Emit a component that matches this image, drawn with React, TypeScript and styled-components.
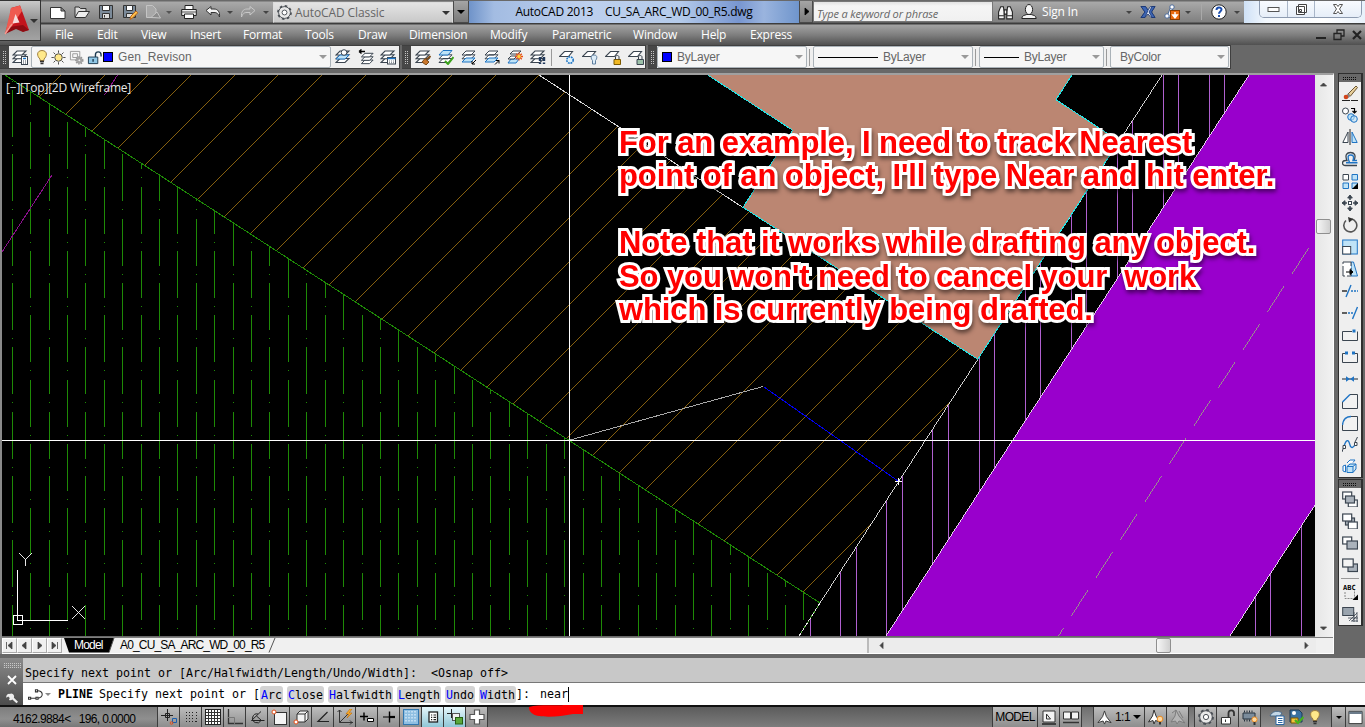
import React from "react";
import styled, { createGlobalStyle, css } from "styled-components";

const Global = createGlobalStyle`
  * { box-sizing: border-box; }
  html, body { margin: 0; padding: 0; background: #686868; overflow: hidden; }
  svg { display: block; flex: none; }
`;

const ui = `"Open Sans", "Noto Sans", sans-serif`;
const arial = `"Liberation Sans", Arial, sans-serif`;
const mono = `"DejaVu Sans Mono", "Liberation Mono", monospace`;

/* ---------- icons ---------- */
const D = "#3b4550";
const B = "#1f74c4";
const LB = "#bfe3f7";

const layers = (fill = "#fff", stroke = D) => (
  <g fill={fill} stroke={stroke} strokeWidth="1.1">
    <path d="M1 13.5h9l4-4H5z" />
    <path d="M1 9.8h9l4-4H5z" />
    <path d="M1 6h9l4-4H5z" />
  </g>
);
const plane = (
  <path d="M.5 7.5h9l4-5h-8z" fill="#fff" stroke={D} strokeWidth="1.1" />
);
const win = (x: number, y: number, f = "#fff") => (
  <rect x={x} y={y} width="9" height="7" fill={f} stroke={D} strokeWidth="1.2" />
);

const art: Record<string, React.ReactNode> = {
  newFile: <path d="M.5 3.500h10.500l4 3.500v7.500H.5zM11 3.500v3.500h4" fill="#fff" stroke="#333" />,
  open: (
    <g stroke="#333" fill="#eee">
      <path d="M1 13V3h4l1.500 1.500H12V7" fill="#ddd" />
      <path d="M1 13.500 4.500 7.500H15.500L11.500 13.500z" />
    </g>
  ),
  save: (
    <g stroke="#333">
      <path d="M1.500 1.500h13v13h-13z" fill="#7b8a99" />
      <path d="M4.500 1.500h7v5h-7z" fill="#fff" />
      <path d="M4.500 9.500h7v5h-7z" fill="#ddd" />
      <path d="M6.500 11v2.500" />
    </g>
  ),
  saveAs: (
    <g stroke="#333">
      <path d="M1.500 1.500h12v12h-12z" fill="#7b8a99" />
      <path d="M4.500 1.500h6v5h-6z" fill="#fff" />
      <path d="M4.500 9.500h6v4h-6z" fill="#ddd" />
      <path d="M8 15.500 9 12l5-5 1.800 1.800-5 5z" fill="#ffc04a" stroke="#b5651d" />
    </g>
  ),
  exportFile: (
    <g fill="#a8a8a8" stroke="#c4c4c4">
      <path d="M1.500 1.500h6l3.500 3.500v8.500H1.500z" />
      <path d="M6 13.500 12 8l3.500 6z" fill="#8b8b8b" />
    </g>
  ),
  print: (
    <g stroke="#222">
      <path d="M4 1.500h8v4H4z" fill="#fff" />
      <path d="M.7 5.500h14.600v6H.7z" fill="#eee" />
      <path d="M1 8h14" stroke="#555" />
      <path d="M3.500 10h9v4.500h-9z" fill="#fff" />
    </g>
  ),
  undo: <path d="M1 6.500 6 2.500v2.500h3c4 0 6 3 5.500 8C13 9.500 12 8.500 9 8.500H6v2.500z" fill="#f2f2f2" stroke="#333" />,
  redo: <path d="M15 6.500 10 2.500v2.500H7c-4 0-6 3-5.500 8C3 9.500 4 8.500 7 8.500h3v2.500z" fill="#999" stroke="#c8c8c8" />,
  gear: (
    <g fill="none" stroke="#4a4f55">
      <circle cx="8" cy="8" r="6.300" fill="#e8e8e8" />
      <circle cx="8" cy="8" r="7" strokeWidth="1.800" strokeDasharray="2.750 2.750" />
      <circle cx="8" cy="8" r="2.600" fill="#fff" />
    </g>
  ),
  binoculars: (
    <g fill="#f5f5f5" stroke="#222">
      <path d="M1.500 14V7.500L3.500 2.500h2.500l.8 5V14z" />
      <path d="M14.500 14V7.500l-2-5H10L9.200 7.500V14z" />
      <path d="M6.800 5.500h2.400v4H6.800zM1.500 11h5M9.500 11h5" />
    </g>
  ),
  person: (
    <g fill="#f5f5f5" stroke="#222">
      <path d="M.8 14.500C1 11.500 3 11.500 5.800 10.500h4.400c2.800 1 4.800 1 5 4z" />
      <ellipse cx="8" cy="5.500" rx="3.600" ry="5" />
    </g>
  ),
  exchange: (
    <g stroke="#16326e" strokeWidth=".8">
      <path d="M1 2.500h4.500L8 6l2.500-3.500H15L11.500 8l3.500 5.500h-4L8 10l-3 3.500H1L5 8z" fill="#e9eef8" />
      <path d="M1 2.500h4.500L8 6.500 5 13.500H1L5 8z" fill="#3d66b5" />
      <path d="M9 8l3-5.500h3L11.500 8l3.500 5.500h-3z" fill="#3d66b5" />
    </g>
  ),
  share: (
    <g>
      <path d="M5 11 8 3M3 12h6" stroke="#4b6a9b" strokeWidth="3.500" />
      <path d="M5 11 8 3M3 12h6" stroke="#fff" strokeWidth="1.600" />
      <circle cx="8" cy="3" r="2.200" fill="#fff" stroke="#4b6a9b" />
      <circle cx="3" cy="12" r="2.200" fill="#fff" stroke="#4b6a9b" />
      <rect x="6.500" y="6.500" width="9" height="9" fill="#e96b10" stroke="#8a3c00" />
      <path d="M11 8v4M8.800 11 11 13.800 13.200 11z" stroke="#fff" strokeWidth="1.400" fill="#fff" />
    </g>
  ),
  help: (
    <g>
      <circle cx="8" cy="8" r="7.200" fill="#fff" stroke="#222" />
      <path d="M5.500 6c0-3.500 5-3.300 5-.4C10.500 7.500 8 7.600 8 9.700" fill="none" stroke="#1d4fae" strokeWidth="2" />
      <rect x="7" y="11" width="2" height="2" fill="#1d4fae" />
    </g>
  ),
  layerProps: (
    <g>
      {layers()}
      <rect x="9.500" y="7.500" width="6" height="8" fill="#fff" stroke={D} />
      <path d="M11 9.500h3" stroke={B} strokeWidth="1.500" />
      <path d="M11 12h3M11 14h3" stroke={D} strokeDasharray="1 1" />
    </g>
  ),
  bulb: (
    <g>
      <path d="M8 1.500c-6 .3-5 6-2 8.500v1.500h4V10c3-2.500 4-8.200-2-8.500z" fill="#ffe98a" stroke="#a08040" />
      <path d="M6 12.500h4M6.500 14.500h3" stroke="#333" strokeWidth="1.600" />
    </g>
  ),
  sun: (
    <g stroke="#444">
      <circle cx="8" cy="8" r="4" fill="#ffe98a" />
      <path d="M8 .5v2.500M8 13v2.500M.5 8H3M13 8h2.500M2.700 2.700l1.700 1.700M11.600 11.600l1.700 1.700M2.700 13.300l1.700-1.700M11.600 4.400l1.700-1.700" />
    </g>
  ),
  vpFreeze: (
    <g stroke="#999" fill="none">
      <path d="M1.500 1.500h10v9h-10zM4 4h5v4H4z" />
      <circle cx="11" cy="11" r="3.500" fill="#aaa" strokeWidth="2" strokeDasharray="1.500 1" />
      <circle cx="11" cy="11" r="1.500" fill="#eee" />
    </g>
  ),
  unlock: (
    <g stroke="#1c3a50">
      <path d="M1.500 7.500h10v7h-10z" fill="#8fc7e6" />
      <path d="M9 7.500V5c0-4 6-4 6 0v2" fill="none" strokeWidth="1.500" />
      <path d="M6.500 9.500v3" strokeWidth="1.500" />
    </g>
  ),
  layCurrent: (
    <g>
      {layers()}
      <path d="M1 10h9l4-4H5z" fill={LB} stroke={B} />
      <circle cx="9" cy="3.500" r="2.800" fill="#fff" stroke={D} />
    </g>
  ),
  layPrev: (
    <g>
      <g transform="translate(2.500 2.500) scale(.9)">{layers()}</g>
      <path d="M1 2.500h6M1 2.500l2.500-2M1 2.500l2.500 2" stroke="#000" fill="none" strokeWidth="1.400" />
    </g>
  ),
  layState: (
    <g>
      {layers()}
      <rect x="7.500" y="8.500" width="8" height="6.500" fill="#fff" stroke={D} />
      <path d="M7.500 9.500h8" stroke={B} strokeWidth="1.500" />
      <path d="M9 12h5M9 13.700h5" stroke={D} strokeWidth=".7" strokeDasharray="1 1" />
    </g>
  ),
  layMatch: (
    <g>
      {layers()}
      <path d="M15.500 7 11 11" stroke="#7a4a1a" strokeWidth="2" />
      <path d="M7 13l3-3.500 4 3.500-3 3z" fill="#c9762b" stroke="#7a4a1a" />
    </g>
  ),
  layCheck: (
    <g>
      <g fill="#fff" stroke={D}>
        <path d="M1 13.500h9l4-4H5zM1 9.800h9l4-4H5z" />
        <path d="M1 6h9l4-4.500H5z" fill={LB} stroke={B} />
      </g>
      <path d="M7 12l3 3 5.500-7" stroke="#3ba31c" strokeWidth="2" fill="none" />
    </g>
  ),
  layIso: (
    <g>
      <g fill="#fff" stroke={D}>
        <path d="M1 6h9l4-4H5zM1 9.800h9l4-4H5z" />
        <path d="M1 13h9l4-4H5z" fill={LB} stroke={B} />
      </g>
      <path d="M15 11l-4 4M11 12v3h3" stroke="#000" fill="none" />
    </g>
  ),
  layUniso: (
    <g>
      <g fill="#fff" stroke={D}>
        <path d="M1 6h9l4-4H5zM1 9.800h9l4-4H5z" />
        <path d="M1 13h9l4-4H5z" fill={LB} stroke={B} />
      </g>
      <path d="M11 15.500l4-4M12 11.500h3v3" stroke="#000" fill="none" />
    </g>
  ),
  layFreeze: (
    <g>
      <path d="M3 5h8l3-3H6z" fill="#fff" stroke={D} />
      <path d="M1 14h8l3-4H4z" fill={LB} stroke={B} />
      <path d="M1 10h6l3-3H4z" fill="#fff" stroke={D} />
      <path d="M12 3.500v8M8 7.500h8M9.200 4.700l5.600 5.600M14.800 4.700l-5.600 5.600" stroke="#e5501a" strokeWidth="1.300" />
      <circle cx="12" cy="7.500" r="1.800" fill="#ffd23a" />
    </g>
  ),
  layWalk: (
    <g>
      {layers()}
      <path d="M10 8v4M10 13.500v1.500M14 8v4M14 13.500v1.500" stroke="#21395c" strokeWidth="2.400" />
    </g>
  ),
  plFreeze: (
    <g>
      {plane}
      <circle cx="11" cy="11" r="3.200" fill="#dff2fc" stroke={B} strokeWidth="1.600" strokeDasharray="1.800 .8" />
    </g>
  ),
  plOff: (
    <g>
      {plane}
      <path d="M12 6c-4 0-3 4-1.500 5.500V15h3v-3.500C15 10 16 6 12 6z" fill="#dcecf8" stroke="#5f7f9f" />
    </g>
  ),
  plLock: (
    <g>
      {plane}
      <path d="M9 10.500h6.500v5H9z" fill="#f0b823" stroke="#7d5a00" />
      <path d="M10.500 10.500V8c0-2 3.500-2 3.500 0v2.500" fill="none" stroke={D} />
    </g>
  ),
  plUnlock: (
    <g>
      {plane}
      <path d="M9 10.500h6.500v5H9z" fill="#9cc0a8" stroke={D} />
      <path d="M10.500 10.500V8c0-2 3.500-2 3.500 0v2.500" fill="none" stroke={D} />
    </g>
  ),
  erase: (
    <g>
      <path d="M6 9l8-8 1.500 1.500L8.500 11z" fill="#e8cf9a" stroke="#6b5632" />
      <path d="M5 9.500l2.500 2.500" stroke="#888" strokeWidth="3" />
      <circle cx="4" cy="12" r="2.300" fill="#d2451b" />
      <path d="M0 15.500h8M9 15.500h7" stroke="#222" />
    </g>
  ),
  copy: (
    <g fill="none">
      <circle cx="3.500" cy="4" r="3" stroke={D} fill="#fff" />
      <circle cx="9" cy="10" r="3.300" stroke={B} fill={LB} />
      <circle cx="12" cy="12" r="3.300" stroke={B} fill={LB} fillOpacity=".6" />
      <path d="M9 1.500h3.500V5M10.500 4l2 2 2-2" stroke="#000" strokeWidth="1.200" />
    </g>
  ),
  mirror: (
    <g>
      <path d="M6 3v10.500H.8z" fill="#fff" stroke={D} />
      <path d="M10 3v10.500h5.200z" fill={LB} stroke={B} />
      <path d="M8 0v16" stroke="#222" />
    </g>
  ),
  offset: (
    <g fill="none">
      <path d="M15 14.500H3.500c-4 0-4-5 0-5H5C2.500 4 5 1.500 8.500 1.500s6 2.500 3.500 8" stroke={D} strokeWidth="1.300" />
      <path d="M15.500 11.800H4M15 9.500h-4C12.500 5 11 4 8.500 4S5 5.500 7.500 11.500" stroke={B} strokeWidth="1.400" />
    </g>
  ),
  array: (
    <g fill={LB} stroke={B}>
      <path d="M1 1.500h5.500V7H1z" fill="#fff" stroke={D} />
      <path d="M10 1.500h5.500V7H10zM1 10h5.500v5.500H1zM10 10h5.500v5.500H10z" />
      <path d="M16 10v6h-6z" fill="#000" stroke="none" />
    </g>
  ),
  move: (
    <g stroke={D} fill={D}>
      <path d="M8 0l2.300 3H5.700zM8 16l2.300-3H5.700zM0 8l3-2.300v4.600zM16 8l-3-2.300v4.600z" />
      <path d="M8 3v2M8 11v2M3 8h2M11 8h2" strokeWidth="1.500" />
      <rect x="6.500" y="6.500" width="3" height="3" fill="#fff" />
    </g>
  ),
  rotate: (
    <g fill="none" stroke="#555">
      <path d="M4 3.500A6.500 6.500 0 1 0 9.500 2" strokeWidth="1.600" />
      <path d="M6 0l5.500 2L7 5.500z" fill="#333" stroke="none" />
    </g>
  ),
  scale: (
    <g>
      <rect x=".7" y="1" width="14.600" height="14" fill={LB} stroke={B} />
      <rect x=".7" y="7.500" width="8" height="7.500" fill="#fff" stroke={D} />
    </g>
  ),
  stretch: (
    <g>
      <path d="M9 1h2.500L15.500 15H9z" fill={LB} stroke={B} />
      <path d="M1 1h8v14H1z" fill="#fff" stroke={D} strokeDasharray="12 2" />
      <path d="M4 11h4M8 8.500l3 2.500-3 2.500z" stroke="#000" fill="#000" />
    </g>
  ),
  trim: <g strokeWidth="1.400"><path d="M0 8h5" stroke="#222" /><path d="M9 8h7" stroke={B} strokeDasharray="2 1" /><path d="M4 14l5-12" stroke={B} /></g>,
  extend: <g strokeWidth="1.400"><path d="M0 8h5" stroke="#222" /><path d="M6 8h6" stroke={B} strokeDasharray="2 1" /><path d="M10.500 14l5-12" stroke={B} /></g>,
  breakPt: <g><path d="M10 4.500H.5v9h15v-9" fill="#f2f2f2" stroke={D} /><rect x="10.500" y="2.500" width="3" height="3" fill={B} /></g>,
  breakTwo: <g><path d="M3 4.500H.5v9h15v-9H13" fill="#f2f2f2" stroke={D} /><path d="M3 2.500h3v3H3zM10 2.500h3v3h-3z" fill={B} /></g>,
  join: <g><path d="M0 8h16" stroke={D} strokeWidth="1.200" /><path d="M4 5.200 8 8l-4 2.800zM12 5.200 8 8l4 2.800z" fill={B} /></g>,
  chamfer: <g><path d="M8 1.500h7.500v14H.5V9" fill="#f2f2f2" stroke={D} /><path d="M.5 9L8 1.500" stroke={B} strokeWidth="1.400" /></g>,
  fillet: <g><path d="M9 1.500h6.500v14H.5V10" fill="#f2f2f2" stroke={D} /><path d="M.5 10C1 5 4 1.500 9 1.500" fill="none" stroke={B} strokeWidth="1.400" /></g>,
  blend: (
    <g fill="none">
      <path d="M0 15l2-6M13 5l2.500-5" stroke={D} />
      <path d="M2 9c3-9 5-5 6-1s4 3 6-2" stroke={B} strokeWidth="1.300" />
      <path d="M1 8.500h2.500v3H1zM12.500 5.500H15v3h-2.500z" stroke={D} fill="#fff" />
    </g>
  ),
  explode: (
    <g fill={LB} stroke={B}>
      <path d="M5 7.500h6v6H5zM5 7.500l3-2.500h6l-3 2.500M14 5v5l-3 3.500" />
      <path d="M1 7l2.500-1v7L1 12zM5 4l3-3h5l-2 2.500" fill="#fff" />
    </g>
  ),
  order1: <g>{win(0.7, 1)}{win(6.3, 9)}<rect x="3.500" y="5" width="9" height="7" fill="#aab2bb" stroke={D} strokeWidth="1.200" /></g>,
  order2: <g><rect x="3.500" y="5" width="9" height="7" fill="#aab2bb" stroke={D} strokeWidth="1.200" />{win(0.7, 1)}{win(6.3, 9)}</g>,
  order3: <g>{win(0.7, 2)}<rect x="5" y="6" width="10.500" height="8" fill="#aab2bb" stroke={D} strokeWidth="1.200" /></g>,
  order4: <g><rect x="6" y="7" width="9.500" height="7.500" fill="#aab2bb" stroke={D} strokeWidth="1.200" /><rect x=".7" y="2" width="10.500" height="8" fill="#f4f4f4" stroke={D} strokeWidth="1.200" /></g>,
  orderText: (
    <g>
      <path d="M3 8v6.500h9.500V6" fill="#eee" stroke="#888" strokeDasharray="2 1" />
      <path d="M16 10.500V16h-5.500z" fill="#000" />
    </g>
  ),
  orderHatch: (
    <g>
      <path d="M7 15l8-8M10 15l5-5M6 12h10M9 15h7M12 6v10M15 6v10" stroke={D} strokeWidth=".8" />
      <rect x=".7" y="1.500" width="11" height="8" fill="#9aa4ae" stroke={D} />
    </g>
  ),
  infer: (
    <g fill="none" stroke="#222">
      <path d="M0 6.500h12M6.500 0v12M4.500 4.500h4v4h-4z" />
      <path d="M11.500 15V9.500h4v4h-4" stroke="#1d5fae" />
      <circle cx="10.500" cy="14" r="1.300" stroke="#e5501a" />
    </g>
  ),
  snap: <path d="M3 3.500h9M3 6.500h9M3 9.500h9M13.500 3v10M3 12.500h10" stroke="#222" strokeDasharray="1 2" />,
  grid: <g><rect x=".5" y=".5" width="15" height="15" stroke="#222" fill="#fff" /><path d="M3.500 1v14M6.500 1v14M9.500 1v14M12.500 1v14M1 3.500h14M1 6.500h14M1 9.500h14M1 12.500h14" stroke="#333" /></g>,
  ortho: <g fill="none" stroke="#333"><path d="M1.500 0v14.500H16" strokeWidth="1.300" /><path d="M1 8.500h6.500V15" stroke="#777" /></g>,
  polar: <g fill="none" stroke="#222"><path d="M2.500 11.500h13M2.500 11.500 12 2.500" /><path d="M9 5a4.500 4.500 0 1 0 3 6.500M7.500 7l5 4.500" /></g>,
  osnap: <g><rect x="3.500" y="3.500" width="12" height="12" fill="#f4f4f4" stroke="#333" /><circle cx="3" cy="3" r="2" fill="#fff" stroke="#e5501a" /></g>,
  osnap3: (
    <g stroke="#333" fill="#f4f4f4">
      <path d="M4 5l3-3h8v8l-3 3H4zM4 5h8v8M12 5l3-3" />
      <circle cx="3" cy="13" r="2" fill="#fff" stroke="#e5501a" />
    </g>
  ),
  otrack: <path d="M12.500 3 3 12.500h11" fill="none" stroke="#222" strokeWidth="1.200" />,
  ducs: <g fill="none" stroke="#333"><path d="M2.500 1v12.500H16M2.500 13.500 12 4M.5 3l2-2 2 2M13 11.500l2 2-2 2" /><path d="M13 0l-4 5h3l-2 4 5-5h-3l3-4z" fill="#ffb52e" stroke="#c26a00" strokeWidth=".6" /></g>,
  dyn: <g stroke="#000" fill="none"><path d="M1 7.500h8M5 3.500v8" strokeWidth="1.400" /><path d="M8.500 9.500h6v3h-6z" fill="#fff" /></g>,
  lwt: <g stroke="#000"><path d="M2 8h6" /><path d="M8 8h6" strokeWidth="2.200" /><path d="M8.500 2.500v11" strokeWidth="1.400" /></g>,
  transp: <g><rect x=".5" y=".5" width="15" height="15" fill="#8fbfe2" stroke="#3277b0" /><path d="M3 2v12M6 2v12M9 2v12M12 2v12" stroke="#d2e8f7" strokeWidth="1.500" strokeDasharray="1.500 1.500" /></g>,
  qprops: <g><rect x="4" y="3" width="8.500" height="10" fill="#fff" stroke="#222" strokeWidth="1.300" /><path d="M6 6h1.200M8.500 6h2.500M6 8.300h1.200M8.500 8.300h2.500M6 10.600h1.200M8.500 10.600h2.500" stroke="#222" strokeWidth="1.200" /></g>,
  selCycle: <g><path d="M0 4.500h9M4.500 0v9" stroke="#222" /><rect x="5.500" y="4.500" width="7" height="7" fill="#eee" stroke="#555" /><rect x="8.500" y="8.500" width="7" height="6.500" fill="#5aa83c" stroke="#255f12" /></g>,
  monitor: <path d="M5.500 1h5v4.500H15v5h-4.500V15h-5v-4.500H1v-5h4.500z" fill="#fff" stroke="#555" strokeWidth="1.200" />,
  paper: <g><path d="M2 2h12v11H2z" fill="#f4f4f4" stroke="#333" /><path d="M5.500 5v5h4z" fill="none" stroke="#333" /><path d="M1 15h14" stroke="#222" strokeWidth="1.500" /></g>,
  views: <g fill="#f4f4f4" stroke="#333"><path d="M.5 3h7v7h-7zM8.500 3h7v7h-7z" /><path d="M0 13.500h16" strokeWidth="1.500" /></g>,
  anno: <path d="M8 1l2 6 5 6.500-5.500-1.800L8 15l-1.500-3.300L1 13.500 6 7z" fill="#fff" stroke="#333" />,
  annoVis: (
    <g>
      <path d="M6 1l2 6 4 6-4.500-1.500L6 15l-1-3.500L.5 13 4.500 7z" fill="#fff" stroke="#333" />
      <circle cx="12" cy="10" r="2.800" fill="#ffd9a0" stroke="#e98a20" />
      <path d="M12 13v2.500" stroke="#333" strokeWidth="2" />
    </g>
  ),
  annoAuto: <path d="M6 1l3 6 6 7-6-2-2 3-1.500-3L1 13l4-6zM2 4l4-3M9 2l4 7" fill="#b5b5b5" stroke="#7c7c7c" />,
  lockStatus: <g stroke="#333" fill="#fff"><path d="M1.500 8.500h9V15h-9z" /><path d="M8.500 8V4c0-3.500 5.500-3.500 5.500 0v3" fill="none" strokeWidth="1.800" /><path d="M5.500 10.500V13" /></g>,
  hardware: (
    <g>
      <path d="M1 4h12v6H1z" fill="#7b8c9c" stroke="#26323e" />
      <path d="M2 2.500h10M2 11.500h6" stroke="#26323e" strokeWidth="2" strokeDasharray="1 1.500" />
      <circle cx="12.500" cy="10.500" r="2.600" fill="#ffd9a0" stroke="#e98a20" />
      <path d="M12.500 13v3" stroke="#333" strokeWidth="2" />
    </g>
  ),
  trayA: <g><path d="M1 7c2-5 8-6 12-3l-2 3H5z" fill="#c4d7e6" stroke="#4a6a88" /><path d="M7 7h8v8.500H7z" fill="#fff" stroke="#2b67a4" /><path d="M9 9.500h4.500M9 11.500h4.500M9 13.500h4.500" stroke="#2b67a4" /></g>,
  trayB: <g><path d="M2 1h9l3 3v9H2z" fill="#39719f" stroke="#1f3b57" /><path d="M3 9h7v5H3z" fill="#f0c23c" stroke="#7d5a00" /><circle cx="6" cy="4" r="2" fill="#fff" /><path d="M7 11l3 3 5.500-6" stroke="#46b31c" strokeWidth="2.200" fill="none" /></g>,
  clean: <g><path d="M1 1.500h14v13H1z" fill="#fff" stroke="#333" /><path d="M1 3h14" stroke="#6b7b8a" strokeWidth="2.500" /></g>,
  pline: <g fill="none" stroke="#333"><path d="M2 11.500h6M8 4.500c7-1 7 7 1 7" /><path d="M.5 10.500h2v2h-2zM7.500 10.500h2v2h-2zM7 3.500h2v2H7z" fill="#fff" /></g>,
  wrench: <path d="M5 2.500a4 4 0 0 0-4.500 5l2.500-1.500 2 2L4 10.500a4 4 0 0 0 4.500-.5l5.500 5 2-2-5.500-5.500A4 4 0 0 0 5 2.500z" fill="#eee" />,
};

const Icon = ({ n, s = 16 }: { n: string; s?: number }) => (
  <svg width={s} height={s} viewBox="0 0 16 16" fill="none">{art[n]}</svg>
);

/* ---------- shared pieces ---------- */
const dots = (bg: string, dot: string) => css`
  background-image: linear-gradient(${bg} 1px, transparent 1px), linear-gradient(90deg, ${bg} 1px, ${dot} 1px);
  background-size: 2px 2px;
`;
const Caret = styled.i<{ c?: string; w?: number }>`
  width: 0; height: 0; flex: none;
  border: ${(p) => p.w ?? 4}px solid transparent;
  border-top-color: ${(p) => p.c ?? "#444"};
  border-bottom: 0;
`;
const Label = styled.span<{ size?: number; ls?: number; c?: string; font?: string }>`
  font: ${(p) => p.size ?? 12}px/16px ${(p) => p.font ?? ui};
  letter-spacing: ${(p) => p.ls ?? 0}px;
  color: ${(p) => p.c ?? "#000"};
  white-space: pre;
`;

/* ---------- shell ---------- */
const Shell = styled.div`
  width: 1365px; height: 727px; overflow: hidden;
  display: flex; flex-direction: column; position: relative;
  background: #686868;
`;

const TitleBar = styled.header`
  height: 25px; display: flex; flex: none; padding-top: 1px;
  background: linear-gradient(#696969 1px, #a9a9a9 2px, #808080 22px, #3d3d3d 23px, #3d3d3d 24px, #a5a5a5 25px);
`;
const AppButton = styled.div`
  position: absolute; left: 0; top: 0; width: 41px; height: 41px; z-index: 2;
  display: flex; align-items: center; padding-left: 3px; gap: 1px;
  background: linear-gradient(#c9c9c9, #8c8c8c 55%, #a3a3a3);
  border: 1px solid #333; border-left: 0;
`;
const Quick = styled.div`
  width: 273px; height: 22px; padding-left: 50px; display: flex; align-items: center; flex: none;
`;
const Gap = styled.span<{ w: number }>`width: ${(p) => p.w}px; flex: none;`;
const Workspace = styled.div`
  width: 180px; height: 21px; margin-top: 1px; padding: 0 2px 0 3px; flex: none;
  display: flex; align-items: center; gap: 3px;
  background: linear-gradient(#e4e4e4, #c9c9c9); border: 1px solid #ddd; border-bottom-color: #8c8c8c;
  span { flex: 1; }
`;
const NarrowButton = styled.div<{ w: number }>`
  width: ${(p) => p.w}px; height: 22px; display: flex; align-items: center; justify-content: center; flex: none;
  background: linear-gradient(#a5a5a5, #7a7a7a); border: 1px solid #4a4a4a; border-top: 0;
`;
const Glass = styled.div<{ w: number; light?: boolean }>`
  width: ${(p) => p.w}px; height: 22px; display: flex; align-items: center; justify-content: center; gap: 12px; flex: none;
  ${(p) =>
    p.light
      ? css`background: linear-gradient(90deg, #cfe1f6, #f3f8fd 22px, #fff 80px, #e8f1fb); align-items: flex-start; justify-content: flex-end; padding-right: 3px;`
      : css`background: linear-gradient(90deg, #6f93c9, #a3bce2 25px, #bdd0ee 120px, #b5cbea 210px, #7896d0 270px, #9ab4de 295px, #6f95cc);`}
`;
const Search = styled.div`
  width: 180px; height: 21px; padding: 4px 3px; background: linear-gradient(#e2e2e2, #f5f5f5 4px, #f0f0f0); flex: none;
  border: 1px solid #777; font: italic 11px/15px ${ui}; color: #666; white-space: nowrap; letter-spacing: -0.15px;
`;
const InfoCenter = styled.div`
  width: 251px; height: 22px; padding-left: 4px; display: flex; align-items: center; flex: none;
  & > * { flex: none; }
`;
const ThinRule = styled.i`width: 1px; height: 16px; background: #a9a9a9; margin: 0 9px 0 10px;`;
const WindowButtons = styled.div`
  display: grid; grid-template-columns: 28px 27px 46px; height: 17px; 
  border: 1px solid #8d9bb0; border-top: 0; border-radius: 0 0 5px 5px; overflow: hidden;
  svg { margin: auto; }
  & > div { display: flex; border-right: 1px solid #a9b6c8; background: linear-gradient(#f8fbff, #e6eef8); }
  & > div:last-child { border-right: 0; }
`;

const MenuBar = styled.nav`
  height: 20px; flex: none; display: flex; position: relative; padding-left: 55px;
  background: linear-gradient(#a3a3a3, #7e7e7e 50%, #555 95%, #505050);
`;
const MenuItem = styled.span<{ w: number }>`
  width: ${(p) => p.w}px; font: 12px/20px ${ui}; letter-spacing: -0.2px; color: #fff; flex: none; white-space: nowrap;
`;
const DocButtons = styled.div`
  margin-left: auto; display: flex; align-items: center; gap: 7px; padding-right: 3px;
`;

const ToolRow = styled.div`
  height: 24px; flex: none; display: flex; gap: 2px; background: #686868;
`;
const ToolPanel = styled.div<{ w: number }>`
  width: ${(p) => p.w}px; height: 24px; display: flex; align-items: center; flex: none;
  background: #efefef; border: 1px solid #3f3f3f; border-left: 0;
`;
const Grip = styled.div`
  width: 9px; height: 100%; flex: none; background: #474747; display: flex; align-items: center; justify-content: center;
  &::after { content: ""; width: 5px; height: 14px; ${dots("#474747", "#c4c4c4")} }
`;
const Cell = styled.div<{ w?: number }>`
  width: ${(p) => p.w ?? 23}px; flex: none; display: flex; justify-content: center;
`;
const Divider = styled.div`width: 1px; height: 17px; background: #9a9a9a; margin: 0 3px 0 2px; flex: none;`;
const Combo = styled.div<{ w: number; pad?: number }>`
  width: ${(p) => p.w}px; height: 22px; flex: none; display: flex; align-items: center; gap: 1px;
  padding: 0 3px 0 ${(p) => p.pad ?? 4}px; border: 1px solid #aab2b8; border-radius: 2px;
  background: #f6f6f6;
  & > ${Caret} { margin-left: auto; }
`;
const Swatch = styled.i`width: 10px; height: 10px; background: #00f; border: 1px solid #000; margin-right: 4px;`;
const LineSample = styled.i<{ w: number }>`width: ${(p) => p.w}px; height: 1px; background: #000; margin-right: 4px;`;

const Work = styled.main`
  height: 585px; flex: none; display: flex; padding-top: 4px;
`;
const Viewer = styled.section`
  width: 1334px; height: 581px; border-top: 2px solid #a0a0a0; border-left: 2px solid #8a8a8a;
  border-right: 1px solid #fff; display: flex; flex-direction: column;
`;
const CanvasRow = styled.div`height: 562px; display: flex; position: relative;`;
const Scroll = styled.div`
  width: 18px; height: 562px; background: linear-gradient(90deg, #e6e6e6, #f2f2f2); position: relative;
  display: flex; flex-direction: column; align-items: center; justify-content: space-between; padding: 5px 1px 4px 0;
`;
const Thumb = styled.div<{ x: number; y: number }>`
  position: absolute; left: ${(p) => p.x}px; top: ${(p) => p.y}px; width: 15px; height: 15px;
  border: 1px solid #8f8f8f; border-radius: 2px; background: linear-gradient(90deg, #f6f6f6, #d0d0d0);
`;
const Note = styled.div`
  position: absolute; left: 617px; top: 51px; color: #f00;
  font: bold 31px/33.4px ${arial}; letter-spacing: -0.1px; white-space: pre;
  -webkit-text-stroke: 6px #fff; paint-order: stroke fill; stroke-linejoin: round;
  filter: drop-shadow(1px 3px 2px rgba(0, 0, 0, 0.5));
`;
const ViewLabel = styled.div`
  position: absolute; left: 4px; top: 5px; font: 12px/16px ${ui}; color: #e8e8e8; white-space: pre; letter-spacing: -0.2px;
`;
const TabRow = styled.div`height: 17px; display: flex; background: #f0f0f0; border-top: 1px solid #808080; border-bottom: 1px solid #fff;`;
const NavButton = styled.div`
  width: 15px; height: 15px; display: flex; align-items: center; justify-content: center;
  border: 1px solid #aaa; border-left-color: #fff; border-top-color: #fff;
`;
const TabStrip = styled.div`width: 216px; height: 15px; position: relative;`;
const ActiveTab = styled.span`
  position: absolute; left: 12px; top: 0; font: 12px/15px ${arial}; color: #fff; letter-spacing: -0.8px;
`;
const SheetTab = styled.span`
  position: absolute; left: 58px; top: 0; font: 12px/15px ${arial}; color: #000; letter-spacing: -0.84px; white-space: nowrap;
`;
const HScroll = styled.div`
  margin-left: auto; width: 449px; height: 15px; position: relative; background: #ececec; border-left: 2px solid #bbb;
  display: flex; align-items: center; justify-content: space-between; padding: 0 5px 0 8px; margin-right: 17px;
`;

const Palettes = styled.aside`
  margin-left: 4px; display: flex; flex-direction: column; gap: 1px; width: 25px;
`;
const Palette = styled.div<{ h: number }>`
  height: ${(p) => p.h}px; background: #efefef; border: 1px solid #2f2f2f; border-right-width: 2px;
  display: flex; flex-direction: column; align-items: center;
`;
const PaletteGrip = styled.div`
  width: 100%; height: 8px; background: #686868; flex: none; display: flex; align-items: center; padding-left: 3px;
  &::after { content: ""; width: 14px; height: 5px; ${dots("#686868", "#0c0c0c")} }
`;
const PaletteCell = styled.div`height: 22px; flex: none; display: flex; align-items: center; position: relative;`;
const TinyAbc = styled.span`
  position: absolute; left: 1px; top: 3px; font: bold 7px/8px ${mono}; letter-spacing: 0; color: #000;
`;
const HRule = styled.div`width: 18px; height: 1px; background: #999; margin: 2px 0; flex: none;`;

const Command = styled.section`height: 47px; flex: none; display: flex; margin-top: 4px;`;
const CommandHandle = styled.div`
  width: 23px; flex: none; background: linear-gradient(#8a8a8a, #4c4c4c); display: flex; flex-direction: column; align-items: center; gap: 7px; padding-top: 4px; overflow: hidden;
  &::before { content: ""; width: 18px; height: 6px; flex: none; ${dots("#848484", "#c8c8c8")} }
`;
const CommandBody = styled.div`flex: 1; display: flex; flex-direction: column; font: 11.63px/20px ${mono}; white-space: pre;`;
const History = styled.div`height: 25px; flex: none; background: #c8c8c8; padding: 5px 2px 0; border-bottom: 1px solid #777;`;
const Prompt = styled.div`height: 22px; background: #fff; display: flex; align-items: center; padding-left: 5px;`;
const Opt = styled.span`
  background: #d3d3d3; border-radius: 3px; height: 17px; line-height: 18px; margin-right: 4px; padding: 0 1px;
  b { font-weight: normal; color: #00f; }
`;
const OptLast = styled(Opt)`margin-right: 0;`;
const TextCursor = styled.i`width: 1px; height: 15px; background: #000;`;

const Status = styled.footer`
  height: 22px; flex: none; display: flex; background: #686868; border-top: 2px solid #111; position: relative;
`;
const Coords = styled.div`
  width: 157px; background: linear-gradient(#7d7d7d, #8f8f8f 60%, #777); padding: 2px 0 0 13px;
`;
const StatusButton = styled.div<{ w?: number; tone?: "lit" | "tray" }>`
  width: ${(p) => p.w ?? 22}px; height: 20px; flex: none; display: flex; align-items: center; justify-content: center; gap: 3px;
  border-left: 1px solid #3c3c3c; overflow: hidden;
  background: ${(p) =>
    p.tone === "lit" ? "linear-gradient(#e6f6fa, #8fc6d6)" : p.tone === "tray" ? "linear-gradient(#6f6f6f, #8f8f8f)" : "linear-gradient(#bdbdbd, #8d8d8d)"};
`;
const StatusFill = styled.div`flex: 1; background: linear-gradient(#5c5c5c, #7c7c7c); border-left: 1px solid #3c3c3c;`;
const Marker = styled.div`
  position: absolute; left: 529px; top: 703px;
`;

/* ---------- drawing ---------- */
const W = 1313, H = 561;
const greenY = (x: number) => 75 + (x - 5) * 0.648;
const greens = Array.from({ length: 44 }, (_, i) => ({
  x: Math.floor(12.2 + 18.413 * i) + 0.5,
  y: (i % 2 ? 113.2 : 145.3) - 64.35 - 55.3,
}));
const golds = Array.from({ length: 30 }, (_, i) => {
  const x = 118.2 + 26.34 * (i - 3);
  return { x: Math.round(x), y: Math.round(greenY(x)) };
});
const violets = [810, 840, 856, 886, 902, 932, 948, 979, 994, 1025, 1040, 1071, 1086, 1117, 1132, 1163, 1178, 1209, 1224, 1255, 1270, 1301];

const Drawing = () => (
  <svg width={W} height={H} viewBox={`2 75 ${W} ${H}`} shapeRendering="crispEdges" fill="none">
    <defs>
      <clipPath id="greenArea"><path d="M2 73 5 75 820 603 799 636H2z" /></clipPath>
      <clipPath id="goldArea"><path d="M5 75H539L743 207.500 977.500 359.500 820 603z" /></clipPath>
      <clipPath id="violetArea"><path d="M1162 75 799 636h87L1249 75zM1315 505 1230 636h85z" /></clipPath>
    </defs>
    <rect x="2" y="75" width={W} height={H} fill="#000" />
    <g clipPath="url(#greenArea)" stroke="#1e8a06">
      {greens.map((g) => (
        <line key={g.x} x1={g.x} x2={g.x} y1={g.y} y2="636" strokeDasharray="47 8 1 8.350" />
      ))}
    </g>
    <g clipPath="url(#goldArea)" stroke="#bd8715" strokeWidth=".7">
      {golds.map((g) => (
        <line key={g.x} x1={g.x} y1={g.y} x2={g.x + 560} y2={g.y - 560} />
      ))}
    </g>
    <path d={`M5 75 820 603`} stroke="#1e8a06" />
    <path d="M52 175 2 252M117.500 75 104.500 95" stroke="#8a108a" />
    <path d="M539 75 743 207.500" stroke="#d8d8d8" />
    <g clipPath="url(#violetArea)" stroke="#b060d0">
      {violets.map((x) => <line key={x} x1={x + 0.5} x2={x + 0.5} y1="75" y2="636" />)}
    </g>
    <path d="M1249 75H1315V505L1230 636H886z" fill="#9900cc" />
    <path d="M1249 75 886 636M1315 505 1230 636" stroke="#f4e4fa" strokeWidth=".9" />
    <path d="M1308.700 248 1058.400 636" stroke="#9a9a88" strokeWidth=".9" strokeDasharray="31.500 13.700" />
    <path d="M1162 75 820 603" stroke="#e8e8e8" strokeWidth=".9" />
    <path d="M820 603 799 636" stroke="#58b040" />
    <path d="M820 603 799 636" stroke="#e8e8e8" strokeDasharray="3 3" />
    <path d="M707.700 75 792.700 130.300 743 207.300 977.800 359.300 1119 141 1056 99.700 1072 75z" fill="#bb8672" />
    <path d="M707.700 75 792.700 130.300 743 207.300 977.800 359.300 1119 141 1056 99.700 1072 75" stroke="#1fe8ea" />
    <path d="M570 440 763 386.500" stroke="#a8a8a8" />
    <path d="M764 387 898 481" stroke="#0000f0" />
    <path d="M898.500 478v7M895 481.500h7" stroke="#fff" />
    <path d="M569.500 75V636M2 440.500H1315" stroke="#fff" />
    <g stroke="#fff">
      <path d="M17.500 570v50.500H68M13.500 615.500h9v9h-9z" />
      <path d="M72 606l13 13M85 606l-13 13M19 553l6.500 6.500L32 553M25.500 559.500V566" strokeWidth=".9" />
    </g>
  </svg>
);

const menus: [string, number][] = [
  ["File", 42], ["Edit", 44], ["View", 49], ["Insert", 53], ["Format", 62], ["Tools", 53], ["Draw", 51],
  ["Dimension", 81], ["Modify", 62], ["Parametric", 81], ["Window", 68], ["Help", 49], ["Express", 50],
];
const modify = ["erase", "copy", "mirror", "offset", "array", "move", "rotate", "scale", "stretch", "trim", "extend", "breakPt", "breakTwo", "join", "chamfer", "fillet", "blend", "explode"];
const notes = [
  "For an example, I need to track Nearest",
  "point of an object, I'll type Near and hit enter.",
  " ",
  "Note that it works while drafting any object.",
  "So you won't need to cancel your  work",
  "which is currently being drafted.",
];
const toggles: [string, boolean][] = [
  ["infer", false], ["snap", false], ["grid", false], ["ortho", false], ["polar", false], ["osnap", false], ["osnap3", false], ["otrack", false],
  ["ducs", false], ["dyn", false], ["lwt", false], ["transp", false], ["qprops", true], ["selCycle", true], ["monitor", false],
];

const Arrow = ({ d, c = "#444" }: { d: string; c?: string }) => (
  <svg width="9" height="9" viewBox="0 0 9 9"><path d={d} fill={c} stroke={c} strokeWidth=".8" /></svg>
);

export default function App() {
  return (
    <Shell>
      <Global />
      <AppButton>
        <svg width="26" height="34" viewBox="0 0 26 34">
          <path d="M8 4 17 1.500 26 26 20 27.500 14 24 9 25 2 30 7 12z" fill="#c2141c" />
          <path d="M8 4 17 1.500 19 7 9 22 2 30z" fill="#ef5a50" />
          <path d="M2 30 6 23 20 21 26 26 20 28 13 25z" fill="#8e0c12" />
          <path d="M12.500 10 16.500 18.500 9.500 19.500z" fill="#f6dcdc" />
          <path d="M2 30 9 20" stroke="#f59a90" strokeWidth="1.500" />
        </svg>
        <Caret c="#333" w={4} />
      </AppButton>
      <TitleBar>
        <Quick>
          <Icon n="newFile" /><Gap w={8} /><Icon n="open" /><Gap w={8} /><Icon n="save" /><Gap w={8} /><Icon n="saveAs" /><Gap w={7} />
          <Icon n="exportFile" /><Gap w={5} /><Caret c="#555" w={3} /><Gap w={9} />
          <Icon n="print" /><Gap w={8} /><Icon n="undo" /><Gap w={6} /><Caret c="#444" w={3} /><Gap w={7} /><Icon n="redo" /><Gap w={7} /><Caret c="#444" w={3} />
        </Quick>
        <Workspace><Icon n="gear" s={15} /><Label c="#666" size={12} ls={-0.1}>AutoCAD Classic</Label><Caret c="#333" w={4} /></Workspace>
        <NarrowButton w={16}><Caret c="#000" w={4} /></NarrowButton>
        <Glass w={330}><Label size={12} ls={-0.27}>AutoCAD 2013</Label><Label size={12} ls={-0.27}>CU_SA_ARC_WD_00_R5.dwg</Label></Glass>
        <NarrowButton w={14}><Arrow d="M3 1l4 3.500-4 3.500z" c="#000" /></NarrowButton>
        <Search>Type a keyword or phrase</Search>
        <InfoCenter>
          <Icon n="binoculars" s={17} /><Gap w={7} /><Icon n="person" s={16} /><Gap w={5} />
          <Label c="#fff" ls={-0.2}>Sign In</Label><Gap w={48} /><Caret c="#444" w={3} /><Gap w={8} />
          <Icon n="exchange" /><Gap w={8} /><Icon n="share" /><Gap w={5} /><Caret c="#444" w={3} /><ThinRule /><Icon n="help" /><Gap w={7} /><Caret c="#444" w={3} />
        </InfoCenter>
        <Glass w={121} light>
          <WindowButtons>
            <div><svg width="14" height="7"><rect x="1" y="1.500" width="11" height="4" fill="#fff" stroke="#555" /></svg></div>
            <div><svg width="13" height="13" fill="#fff" stroke="#444"><path d="M3.500 1.500h8v8h-8zM1.500 3.500h8v8h-8zM4.500 6.500h2v2h-2z" /></svg></div>
            <div><svg width="12" height="12"><path d="M1.500 1.500h3L6 3.500 7.500 1.500h3L7.500 6l3 4.500h-3L6 8.500 4.500 10.500h-3L4.500 6z" fill="#fff" stroke="#555" /></svg></div>
          </WindowButtons>
        </Glass>
      </TitleBar>
      <MenuBar>
        {menus.map(([m, w]) => <MenuItem key={m} w={w}>{m}</MenuItem>)}
        <DocButtons>
          <svg width="10" height="10"><path d="M0 8h10" stroke="#222" strokeWidth="2" /></svg>
          <svg width="12" height="12" fill="none" stroke="#222" strokeWidth="1.300"><path d="M4 4V1h7v6H8M1 4.500h7v6H1z" /></svg>
          <svg width="10" height="10"><path d="M1 1l8 8M9 1L1 9" stroke="#222" strokeWidth="2.200" /></svg>
        </DocButtons>
      </MenuBar>
      <ToolRow>
        <ToolPanel w={400}>
          <Grip /><Cell w={22}><Icon n="layerProps" /></Cell>
          <Combo w={300} pad={2}>
            <Icon n="bulb" /><Icon n="sun" s={15} /><Gap w={1} /><Icon n="vpFreeze" s={15} /><Gap w={1} /><Icon n="unlock" s={15} /><Swatch />
            <Label c="#666" font={arial} ls={0.1}>Gen_Revison</Label><Caret c="#999" w={4} />
          </Combo>
          <Cell w={24}><Icon n="layCurrent" /></Cell><Cell w={22}><Icon n="layPrev" /></Cell><Cell w={22}><Icon n="layState" /></Cell>
        </ToolPanel>
        <ToolPanel w={244}>
          <Grip />
          {["layMatch", "layCheck", "layIso", "layUniso", "layFreeze", "layWalk"].map((n) => <Cell key={n}><Icon n={n} /></Cell>)}
          <Divider />
          {["plFreeze", "plOff", "plLock", "plUnlock"].map((n) => <Cell key={n}><Icon n={n} /></Cell>)}
        </ToolPanel>
        <ToolPanel w={583}>
          <Grip />
          <Combo w={150}><Swatch /><Label c="#666" font={arial} ls={-0.2}>ByLayer</Label><Caret c="#999" w={4} /></Combo>
          <Divider />
          <Combo w={160}><LineSample w={60} /><Label c="#666" font={arial} ls={-0.2}>ByLayer</Label><Caret c="#999" w={4} /></Combo>
          <Divider />
          <Combo w={125}><LineSample w={35} /><Label c="#666" font={arial} ls={-0.2}>ByLayer</Label><Caret c="#999" w={4} /></Combo>
          <Divider />
          <Combo w={119} pad={9}><Label c="#666" font={arial} ls={-0.3}>ByColor</Label><Caret c="#999" w={4} /></Combo>
        </ToolPanel>
      </ToolRow>
      <Work>
        <Viewer>
          <CanvasRow>
            <Drawing />
            <ViewLabel>[−][Top][2D Wireframe]</ViewLabel>
            <Note>{notes.map((t, i) => <div key={i}>{t}</div>)}</Note>
            <Scroll>
              <Arrow d="M1.500 6l3-3 3 3z" />
              <Thumb x={1} y={144} />
              <Arrow d="M1.500 3l3 3 3-3z" />
            </Scroll>
          </CanvasRow>
          <TabRow>
            <NavButton><Arrow d="M7 1v7L3 4.500zM1.500 1v7" /></NavButton>
            <NavButton><Arrow d="M6 1v7L2 4.500z" /></NavButton>
            <NavButton><Arrow d="M3 1v7l4-3.500z" /></NavButton>
            <NavButton><Arrow d="M2 1v7l4-3.500zM7.500 1v7" /></NavButton>
            <TabStrip>
              <svg width="216" height="15"><path d="M2 0H52L47 14.500H7z" fill="#000" /><path d="M52 0 47 14.500M213 0 207 14.500" stroke="#555" fill="none" /></svg>
              <ActiveTab>Model</ActiveTab>
              <SheetTab>A0_CU_SA_ARC_WD_00_R5</SheetTab>
            </TabStrip>
            <HScroll>
              <Arrow d="M6 1.500v6L3 4.500z" />
              <Thumb x={287} y={0} />
              <Arrow d="M3 1.500v6l3-3z" />
            </HScroll>
          </TabRow>
        </Viewer>
        <Palettes>
          <Palette h={405}>
            <PaletteGrip />
            {modify.map((n) => <PaletteCell key={n}><Icon n={n} /></PaletteCell>)}
          </Palette>
          <Palette h={147}>
            <PaletteGrip />
            {["order1", "order2", "order3", "order4"].map((n) => <PaletteCell key={n}><Icon n={n} /></PaletteCell>)}
            <HRule />
            <PaletteCell><Icon n="orderText" /><TinyAbc>ABC</TinyAbc></PaletteCell>
            <PaletteCell><Icon n="orderHatch" /></PaletteCell>
          </Palette>
        </Palettes>
      </Work>
      <Command>
        <CommandHandle>
          <svg width="10" height="10"><path d="M1 1l8 8M9 1L1 9" stroke="#fff" strokeWidth="1.800" /></svg>
          <Icon n="wrench" s={12} />
        </CommandHandle>
        <CommandBody>
          <History>Specify next point or [Arc/Halfwidth/Length/Undo/Width]:  &lt;Osnap off&gt;</History>
          <Prompt>
            <Icon n="pline" s={17} /><Caret c="#888" w={3} /><Gap w={7} />
            <b>PLINE</b><Gap w={6} />Specify next point or [
            <Opt><b>A</b>rc</Opt><Opt><b>C</b>lose</Opt><Opt><b>H</b>alfwidth</Opt><Opt><b>L</b>ength</Opt><Opt><b>U</b>ndo</Opt><OptLast><b>W</b>idth</OptLast>]: <Gap w={3} />near<TextCursor />
          </Prompt>
        </CommandBody>
      </Command>
      <Status>
        <Coords><Label font={arial} ls={-0.62}>4162.9884&lt;   196, 0.0000</Label></Coords>
        {toggles.map(([n, lit]) => <StatusButton key={n} tone={lit ? "lit" : undefined}><Icon n={n} /></StatusButton>)}
        <StatusFill />
        <StatusButton w={45}><Label font={arial} ls={-0.65}>MODEL</Label></StatusButton>
        <StatusButton><Icon n="paper" /></StatusButton>
        <StatusButton><Icon n="views" /></StatusButton>
        <StatusButton w={12} tone="tray" />
        <StatusButton w={51}><Icon n="anno" s={15} /><Label font={arial} ls={-0.5}>1:1</Label><Caret c="#000" w={4} /></StatusButton>
        <StatusButton><Icon n="annoVis" /></StatusButton>
        <StatusButton><Icon n="annoAuto" /></StatusButton>
        <StatusButton w={6} tone="tray" />
        <StatusButton><Icon n="gear" /></StatusButton>
        <StatusButton><Icon n="lockStatus" /></StatusButton>
        <StatusButton><Icon n="hardware" /></StatusButton>
        <StatusButton w={71} tone="tray"><Icon n="trayA" /><Icon n="trayB" /><Icon n="bulb" /></StatusButton>
        <StatusButton w={14}><Caret c="#000" w={3} /></StatusButton>
        <StatusButton w={20}><Icon n="clean" s={15} /></StatusButton>
      </Status>
      <Marker>
        <svg width="55" height="14"><path d="M0 4C10 1 30 3 34 2l20 0v9H44C30 14 10 15 4 11 0 8 0 6 0 4z" fill="#f00" /></svg>
      </Marker>
    </Shell>
  );
}
